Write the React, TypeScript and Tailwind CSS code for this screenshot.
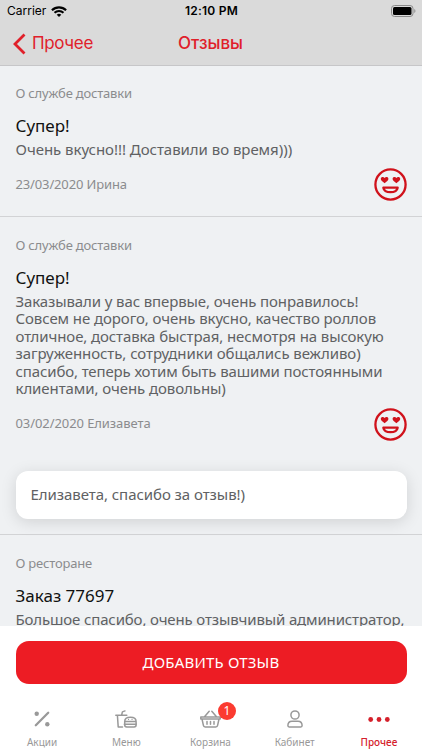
import type { ReactNode } from "react";

function Smile() {
  return (
    <svg className="h-[33px] w-[33px] shrink-0" viewBox="0 0 33 33" fill="none">
      <circle cx="16.500" cy="16.500" r="15.100" stroke="#d0121b" strokeWidth="2.300" />
      <path
        d="M10.600 15.300C8.500 13.600 6.800 12.500 6.800 11c0-2.100 2.700-2.500 3.800-.9 1.100-1.600 3.800-1.200 3.800.9 0 1.500-1.700 2.600-3.800 4.300ZM22.400 15.300c-2.100-1.700-3.800-2.800-3.800-4.300 0-2.100 2.700-2.500 3.800-.9 1.100-1.600 3.800-1.200 3.800.9 0 1.500-1.700 2.600-3.800 4.300Z"
        fill="#d0121b"
      />
      <path d="M9.300 19.700h14.400c-.6 3.200-3.200 4.500-7.200 4.500s-6.600-1.300-7.200-4.500Z" stroke="#d0121b" strokeWidth="2.200" strokeLinejoin="round" />
    </svg>
  );
}

function Review(props: {
  topic: string;
  title: string;
  author?: string;
  authorClass?: string;
  className: string;
  children: ReactNode;
  reply?: string;
}) {
  return (
    <article className={`px-[15.500px] ${props.className}`}>
      <p className="h-[18px] text-[13px] leading-[18px] tracking-[-0.200px] text-[#8b8c8e]">{props.topic}</p>
      <h2 className="mt-[12px] h-6 text-[17px] leading-6 text-[#111]">{props.title}</h2>
      <div className="mt-[3px] text-[15px] leading-[17.600px] whitespace-nowrap text-[#606163]">{props.children}</div>
      {props.author && (
        <div className="mt-[10px] flex h-8 items-center justify-between">
          <span className={`text-[13px] text-[#8b8c8e] ${props.authorClass}`}>{props.author}</span>
          <Smile />
        </div>
      )}
      {props.reply && (
        <div className="mt-[30.500px] flex h-12 items-center rounded-xl bg-white px-[15px] text-[15px] tracking-[-0.060px] text-[#606163] shadow-[0_3px_16px_rgba(0,0,0,0.130)]">
          {props.reply}
        </div>
      )}
    </article>
  );
}

function Tab({ label, active, children }: { label: string; active?: boolean; children: ReactNode }) {
  return (
    <div className={`flex flex-1 flex-col items-center pt-[14px] ${active ? "text-[#d5202b]" : "text-[#999]"}`}>
      <div className="relative flex h-6 items-center justify-center">{children}</div>
      <span className={`mt-[5px] text-[10px] leading-[14px] ${active ? "font-medium" : ""}`}>{label}</span>
    </div>
  );
}

export default function App() {
  return (
    <div className="flex h-[750px] w-[422px] flex-col overflow-hidden bg-[#eff1f3] font-['Noto_Sans',sans-serif]">
      <header className="h-[66px] shrink-0 border-b border-[#c6c6c8] bg-[#dadada]">
        <div className="flex h-[22px] items-center justify-between pr-[6px] pl-[7px] font-['Inter',sans-serif] text-black">
          <div className="flex flex-1 items-center gap-[5px]">
            <span className="text-[12px]">Carrier</span>
            <svg className="h-[11px] w-4" viewBox="0 0 16 11" fill="none" stroke="#000">
              <path d="M.9 4.200a10.300 10.300 0 0 1 14.200 0" strokeWidth="2.200" />
              <path d="M3.500 6.800a6.600 6.600 0 0 1 9 0" strokeWidth="2" />
              <path d="M8 11 5.700 8.700a3.400 3.400 0 0 1 4.600 0Z" fill="#000" stroke="none" />
            </svg>
          </div>
          <span className="text-[12px] font-semibold tracking-[0.250px]">12:10 PM</span>
          <div className="flex flex-1 justify-end">
            <svg className="h-3 w-[25px]" viewBox="0 0 25 12" fill="none">
              <rect x=".5" y=".5" width="21.500" height="11" rx="3" stroke="#8a8a8a" />
              <rect x="2" y="2" width="18.500" height="8" rx="1.500" fill="#000" />
              <path d="M23.300 4v4c1.500-.5 1.500-3.500 0-4Z" fill="#8a8a8a" />
            </svg>
          </div>
        </div>
        <div className="flex h-[43px] items-center justify-between pr-[14px] pl-[13px] font-['Inter',sans-serif] text-[17px] text-[#e0202a]">
          <div className="flex flex-1 items-center gap-[6px]">
            <svg className="h-[22px] w-[13px]" viewBox="0 0 13 22" fill="none">
              <path d="M11.500 1.500 2 11l9.500 9.500" stroke="currentColor" strokeWidth="2.800" />
            </svg>
            <span className="tracking-[-0.350px]">Прочее</span>
          </div>
          <span className="font-medium">Отзывы</span>
          <div className="flex-1" />
        </div>
      </header>

      <main className="h-[560px] shrink-0 overflow-hidden">
        <Review
          className="h-[151px] border-b border-[#d2d3d5] pt-[18px]"
          topic="О службе доставки"
          title="Супер!"
          author="23/03/2020 Ирина"
          authorClass="tracking-[-0.140px]"
        >
          <p className="tracking-[-0.040px]">Очень вкусно!!! Доставили во время)))</p>
        </Review>
        <Review
          className="h-[318px] border-b border-[#d2d3d5] pt-[18.500px]"
          topic="О службе доставки"
          title="Супер!"
          author="03/02/2020 Елизавета"
          authorClass="tracking-[-0.080px]"
          reply="Елизавета, спасибо за отзыв!)"
        >
          <p className="tracking-[-0.115px]">Заказывали у вас впервые, очень понравилось!</p>
          <p className="tracking-[-0.085px]">Совсем не дорого, очень вкусно, качество роллов</p>
          <p className="tracking-[-0.105px]">отличное, доставка быстрая, несмотря на высокую</p>
          <p className="tracking-[-0.070px]">загруженность, сотрудники общались вежливо)</p>
          <p className="tracking-[-0.130px]">спасибо, теперь хотим быть вашими постоянными</p>
          <p className="tracking-[-0.075px]">клиентами, очень довольны)</p>
        </Review>
        <Review className="pt-[18.500px]" topic="О ресторане" title="Заказ 77697">
          <p className="tracking-[-0.140px]">Большое спасибо, очень отзывчивый администратор,</p>
        </Review>
      </main>

      <footer className="flex flex-1 flex-col bg-white">
        <div className="px-[15.500px] pt-[15px]">
          <button className="flex h-[43px] w-full items-center justify-center rounded-[13px] bg-[#ed1c24] text-[15px] tracking-[0.200px] text-white">
            ДОБАВИТЬ ОТЗЫВ
          </button>
        </div>
        <nav className="mt-[8px] flex pr-px">
          <Tab label="Акции">
            <svg className="mt-[2px] h-4 w-4" viewBox="0 0 16 16">
              <path d="M1.800 14.200 14.200 1.800" stroke="currentColor" strokeWidth="2.300" strokeLinecap="round" />
              <circle cx="2.700" cy="2.700" r="2.200" fill="currentColor" />
              <circle cx="13.300" cy="13.300" r="2.200" fill="currentColor" />
            </svg>
          </Tab>
          <Tab label="Меню">
            <svg className="mt-[2px] h-[18px] w-[22px]" viewBox="0 0 22 18" fill="none" stroke="currentColor" strokeWidth="1.500" strokeLinecap="round" strokeLinejoin="round">
              <path d="M.8 5.200h11M2.400 5.200l.8 11.700h4.300M6.600 5.200l.8-3.300 2.600-1" />
              <path d="M9.700 11.400c0-2.700 2.100-4.100 5.700-4.100s5.700 1.400 5.700 4.100ZM9.300 14.200h12.200M9.700 11.400v3.700c0 1.300.7 1.900 2 1.900h7.400c1.300 0 2-.6 2-1.900v-3.700" />
              <path d="M13.500 9.400h.1M17 9.400h.1" strokeWidth="1.100" />
            </svg>
          </Tab>
          <Tab label="Корзина">
            <svg className="mt-[2px] h-[18px] w-[21px]" viewBox="0 0 21 18" fill="none" stroke="currentColor" strokeWidth="1.500" strokeLinecap="round" strokeLinejoin="round">
              <path d="M.8 7h19.400v2H.8ZM2 9l1.400 6.400c.2 1 .8 1.500 1.700 1.500h10.800c.9 0 1.500-.5 1.700-1.500L19 9M4.500 6.800l4.700-5.600M16.500 6.800l-4.700-5.600M7 11.600v2.600M10.500 11.600v2.600M14 11.600v2.600" />
            </svg>
            <span className="absolute -top-[4px] left-[18px] flex h-[18px] w-[18px] items-center justify-center rounded-full bg-[#fb3b30] text-[12px] text-white">1</span>
          </Tab>
          <Tab label="Кабинет">
            <svg className="mt-[2px] h-[18px] w-4" viewBox="0 0 16 18" fill="none" stroke="currentColor" strokeWidth="1.500">
              <circle cx="8" cy="5" r="4.100" />
              <path d="M.9 15.600c0-3.300 1.500-4.400 4.100-4.400h6c2.600 0 4.100 1.100 4.100 4.400 0 .9-.4 1.300-1.200 1.300H2.100c-.8 0-1.200-.4-1.200-1.300Z" />
            </svg>
          </Tab>
          <Tab label="Прочее" active>
            <svg className="mt-[2px] h-[5px] w-[22px]" viewBox="0 0 22 5" fill="currentColor">
              <circle cx="2.700" cy="2.500" r="2.400" />
              <circle cx="11" cy="2.500" r="2.400" />
              <circle cx="19.300" cy="2.500" r="2.400" />
            </svg>
          </Tab>
        </nav>
      </footer>
    </div>
  );
}
